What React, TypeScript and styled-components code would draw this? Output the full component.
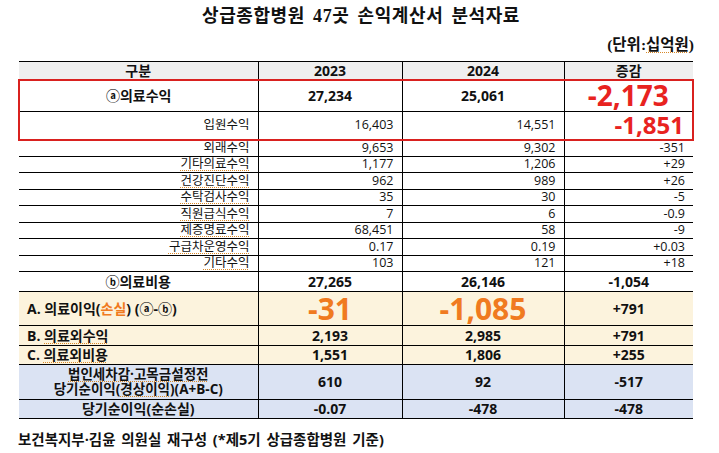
import React from "react";
import styled, { createGlobalStyle } from "styled-components";

const Global = createGlobalStyle`
  html, body { margin: 0; padding: 0; background: #fff; }
  body { font-family: "Open Sans", "Noto Sans CJK KR", sans-serif; color: #111; }
`;

const Page = styled.div`
  width: 719px;
  height: 453px;
  box-sizing: border-box;
  padding: 4px 27px 0 18px;
  display: flex;
  flex-direction: column;
`;

const Title = styled.h1`
  margin: 0;
  font-family: "Liberation Serif", "Noto Sans CJK KR", serif;
  font-weight: 700;
  font-size: 18px;
  line-height: 24px;
  text-align: center;
  letter-spacing: 0.6px;
  word-spacing: 3px;
  padding-left: 12px;
`;

const Unit = styled.div`
  margin-top: 6px;
  font-family: "Liberation Serif", "Noto Sans CJK KR", serif;
  font-weight: 700;
  font-size: 15.5px;
  line-height: 21px;
  text-align: right;
  margin-right: -2px;
`;

const Table = styled.table`
  margin-top: 6px;
  width: 674px;
  border-collapse: collapse;
  table-layout: fixed;
  font-size: 13px;
`;

type RowKind = "head" | "main" | "sub" | "beige" | "blue";

const bgFor: Record<RowKind, string> = {
  head: "#efefef",
  main: "#ffffff",
  sub: "#ffffff",
  beige: "#fcf3dd",
  blue: "#dbe3f3",
};

const Row = styled.tr<{ $kind: RowKind; $h: number; $box?: "top" | "bottom" }>`
  height: ${(p) => p.$h}px;
  background: ${(p) => bgFor[p.$kind]};
  font-weight: ${(p) => (p.$kind === "sub" ? 400 : 700)};
  font-size: ${(p) => (p.$kind === "sub" ? "12.5px" : "14px")};

  & > td {
    border-top: 1px solid #000;
    border-bottom: 1px solid #000;
    border-left: 1px solid #000;
    border-right: 1px solid #000;
    padding: 0 8px;
    line-height: 1.1;
    white-space: nowrap;
    overflow: visible;
  }
  & > td:first-child { border-left: none; }
  & > td:last-child { border-right: none; }

  ${(p) =>
    p.$box
      ? `
    & > td:first-child { border-left: 2.5px solid #d9211f; }
    & > td:last-child { border-right: 2.5px solid #d9211f; }
    ${p.$box === "top" ? "& > td { border-top: 2.5px solid #d9211f; }" : ""}
    ${p.$box === "bottom" ? "& > td { border-bottom: 2.5px solid #d9211f; }" : ""}
  `
      : ""}
`;

const Cell = styled.td<{ $align?: "left" | "center" | "right" }>`
  text-align: ${(p) => p.$align || "center"};
  vertical-align: middle;
`;

const TwoLine = styled.div`
  font-size: 13.5px;
  line-height: 15px;
`;

const Squiggle = styled.span`
  text-decoration: underline dotted #d98a2b;
  text-underline-offset: 2px;
  text-decoration-thickness: 1px;
`;

const Big = styled.span<{ $color: string; $size: number }>`
  display: inline-block;
  color: ${(p) => p.$color};
  font-size: ${(p) => p.$size}px;
  font-weight: 700;
  line-height: 0.9;
`;

const Orange = styled.span`
  color: #f07a20;
`;

const Footer = styled.div`
  margin-top: 12px;
  font-weight: 700;
  font-size: 14.5px;
  line-height: 18px;
  word-spacing: 2px;
`;

const subRows: [string, string, string, string][] = [
  ["외래수익", "9,653", "9,302", "-351"],
  ["기타의료수익", "1,177", "1,206", "+29"],
  ["건강진단수익", "962", "989", "+26"],
  ["수탁검사수익", "35", "30", "-5"],
  ["직원급식수익", "7", "6", "-0.9"],
  ["제증명료수익", "68,451", "58", "-9"],
  ["구급차운영수익", "0.17", "0.19", "+0.03"],
  ["기타수익", "103", "121", "+18"],
];

export default function App() {
  return (
    <>
      <Global />
      <Page>
        <Title>상급종합병원 47곳 손익계산서 분석자료</Title>
        <Unit>(단위:<Squiggle>십억원</Squiggle>)</Unit>
        <Table>
          <colgroup>
            <col style={{ width: 239 }} />
            <col style={{ width: 144 }} />
            <col style={{ width: 162 }} />
            <col style={{ width: 129 }} />
          </colgroup>
          <tbody>
            <Row $kind="head" $h={18}>
              <Cell>구분</Cell>
              <Cell>2023</Cell>
              <Cell>2024</Cell>
              <Cell>증감</Cell>
            </Row>
            <Row $kind="main" $h={32} $box="top">
              <Cell>ⓐ의료수익</Cell>
              <Cell>27,234</Cell>
              <Cell>25,061</Cell>
              <Cell>
                <Big $color="#e8231f" $size={28}>-2,173</Big>
              </Cell>
            </Row>
            <Row $kind="sub" $h={28} $box="bottom">
              <Cell $align="right">입원수익</Cell>
              <Cell $align="right">16,403</Cell>
              <Cell $align="right">14,551</Cell>
              <Cell $align="right">
                <Big $color="#e8231f" $size={24}>-1,851</Big>
              </Cell>
            </Row>
            {subRows.map((r) => (
              <Row key={r[0]} $kind="sub" $h={16.5}>
                <Cell $align="right">
                  {r[0] === "외래수익" ? r[0] : <Squiggle>{r[0]}</Squiggle>}
                </Cell>
                <Cell $align="right">{r[1]}</Cell>
                <Cell $align="right">{r[2]}</Cell>
                <Cell $align="right">{r[3]}</Cell>
              </Row>
            ))}
            <Row $kind="main" $h={20}>
              <Cell>ⓑ의료비용</Cell>
              <Cell>27,265</Cell>
              <Cell>26,146</Cell>
              <Cell>-1,054</Cell>
            </Row>
            <Row $kind="beige" $h={34}>
              <Cell $align="left">
                A. 의료이익(<Orange>손실</Orange>) (ⓐ-ⓑ)
              </Cell>
              <Cell>
                <Big $color="#f07a20" $size={30}>-31</Big>
              </Cell>
              <Cell>
                <Big $color="#f07a20" $size={30}>-1,085</Big>
              </Cell>
              <Cell>+791</Cell>
            </Row>
            <Row $kind="beige" $h={20}>
              <Cell $align="left">
                B. <Squiggle>의료외수익</Squiggle>
              </Cell>
              <Cell>2,193</Cell>
              <Cell>2,985</Cell>
              <Cell>+791</Cell>
            </Row>
            <Row $kind="beige" $h={19}>
              <Cell $align="left">
                C. <Squiggle>의료외비용</Squiggle>
              </Cell>
              <Cell>1,551</Cell>
              <Cell>1,806</Cell>
              <Cell>+255</Cell>
            </Row>
            <Row $kind="blue" $h={35}>
              <Cell>
                <TwoLine>
                  <Squiggle>법인세차감·고목금설정전</Squiggle>
                  <br />
                  당기순이익(<Squiggle>경상이익</Squiggle>)(A+B-C)
                </TwoLine>
              </Cell>
              <Cell>610</Cell>
              <Cell>92</Cell>
              <Cell>-517</Cell>
            </Row>
            <Row $kind="blue" $h={19}>
              <Cell>당기순이익(순손실)</Cell>
              <Cell>-0.07</Cell>
              <Cell>-478</Cell>
              <Cell>-478</Cell>
            </Row>
          </tbody>
        </Table>
        <Footer>보건복지부·김윤 의원실 재구성 (*제5기 상급종합병원 기준)</Footer>
      </Page>
    </>
  );
}
